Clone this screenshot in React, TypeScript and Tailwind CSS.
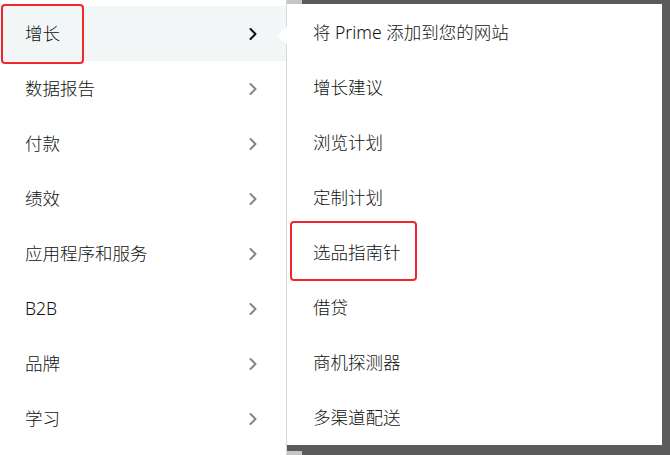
import React from 'react';

const leftItems = ['增长', '数据报告', '付款', '绩效', '应用程序和服务', 'B2B', '品牌', '学习'];
const rightItems = ['将 Prime 添加到您的网站', '增长建议', '浏览计划', '定制计划', '选品指南针', '借贷', '商机探测器', '多渠道配送'];

const Chevron: React.FC<{ active?: boolean }> = ({ active }) => (
    <svg width="10" height="14" viewBox="0 0 10 14" fill="none">
        <path
            d="M2.5 2 L7.5 7 L2.5 12"
            stroke={active ? '#0f1111' : '#80878a'}
            strokeWidth="2"
            strokeLinecap="round"
            strokeLinejoin="round"
        />
    </svg>
);

const App: React.FC = () => {
    return (
        <div
            className="relative flex w-[670px] h-[455px] overflow-hidden bg-white text-[#0f1111]"
            style={{ fontFamily: '"Noto Sans", "Noto Sans CJK SC", sans-serif' }}
        >
            {/* left menu */}
            <div className="w-[286px] h-full pt-[6px] bg-white">
                {leftItems.map((item, i) => (
                    <div
                        key={item}
                        className={`flex items-center justify-between h-[55px] pl-[25px] pr-[28px] ${i === 0 ? 'bg-[#f3f6f6]' : ''}`}
                    >
                        <span className="text-[17.5px] font-light leading-none">{item}</span>
                        <Chevron active={i === 0} />
                    </div>
                ))}
            </div>
            <div className="w-px h-full bg-[#d5d9d9]" />

            {/* right flyout */}
            <div className="flex flex-col flex-1 h-full bg-[#5b5b5b]">
                <div className="flex h-[5px]">
                    <div className="w-[15px] bg-[#c6c6c6]" />
                    <div className="flex-1" />
                </div>
                <div className="flex flex-1">
                    <div className="w-[375px] bg-white pt-px">
                        {rightItems.map((item) => (
                            <div key={item} className="flex items-center h-[55px] pl-[26px]">
                                <span className="text-[17.5px] font-light leading-none">{item}</span>
                            </div>
                        ))}
                    </div>
                    <div className="flex-1" />
                </div>
                <div className="flex h-[11px]">
                    <div className="w-[15px] bg-[#c6c6c6] mt-[6px]" />
                    <div className="flex-1" />
                </div>
            </div>

            {/* pointer into flyout */}
            <svg className="absolute left-[276px] top-[26px]" width="12" height="19" viewBox="0 0 12 19">
                <path d="M11 0.5 L1 9.5 L11 18.5 Z" fill="#ffffff" />
            </svg>

            {/* highlight boxes */}
            <div className="absolute left-[1px] top-[4px] w-[83px] h-[60px] border-[2.5px] border-[#f0282d] rounded-[4px]" />
            <div className="absolute left-[290px] top-[221px] w-[127px] h-[60px] border-[2.5px] border-[#f0282d] rounded-[4px]" />
        </div>
    );
};

export default App;
